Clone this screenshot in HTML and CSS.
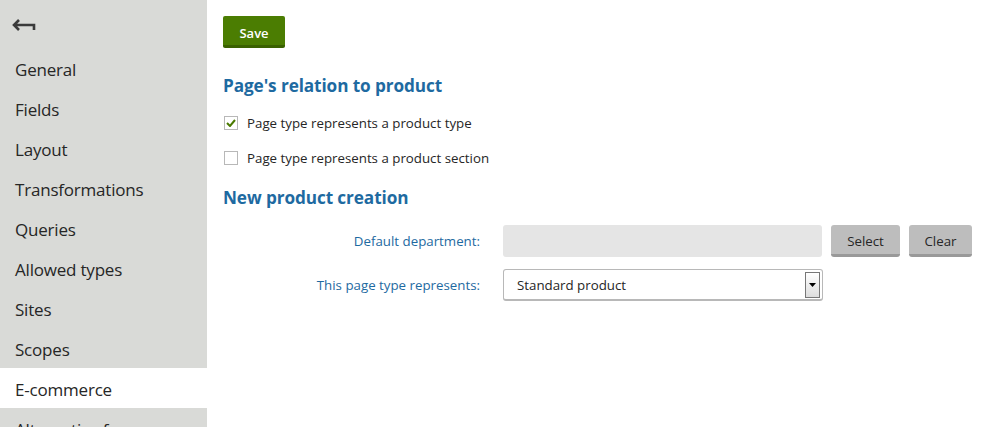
FILE: index.html
```html
<!DOCTYPE html>
<html>
<head>
<meta charset="utf-8">
<link rel="stylesheet" href="styles.css">
</head>
<body>
<div class="layout">
  <nav class="sidebar">
    <div class="back">
      <svg width="24" height="14" viewBox="0 0 24 14"><path d="M7 2 L2 7 L7 12 M2 7 H22 V12" fill="none" stroke="#3a3a3a" stroke-width="2.6" stroke-linejoin="miter"/></svg>
    </div>
    <ul class="menu">
      <li>General</li>
      <li>Fields</li>
      <li>Layout</li>
      <li>Transformations</li>
      <li>Queries</li>
      <li>Allowed types</li>
      <li>Sites</li>
      <li>Scopes</li>
      <li class="active">E-commerce</li>
      <li>Alternative forms</li>
    </ul>
  </nav>
  <main class="content">
    <button class="btn-save">Save</button>
    <h2 class="heading">Page's relation to product</h2>
    <label class="check"><span class="box checked"><svg width="10" height="8" viewBox="0 0 10 8"><path d="M1 4 L4 7 L9 1" fill="none" stroke="#4a7a00" stroke-width="2"/></svg></span>Page type represents a product type</label>
    <label class="check"><span class="box"></span>Page type represents a product section</label>
    <h2 class="heading heading2">New product creation</h2>
    <div class="form-row">
      <div class="label">Default department:</div>
      <div class="input"></div>
      <button class="btn-gray">Select</button>
      <button class="btn-gray">Clear</button>
    </div>
    <div class="form-row row2">
      <div class="label">This page type represents:</div>
      <div class="select"><span>Standard product</span><span class="arrow"><svg width="7" height="4" viewBox="0 0 7 4"><path d="M0 0 H7 L3.5 4 Z" fill="#000"/></svg></span></div>
    </div>
  </main>
</div>
</body>
</html>
```
FILE: styles.css
```css
* { box-sizing: border-box; }
html, body { margin: 0; padding: 0; }
body {
  font-family: "Open Sans", "Noto Sans", sans-serif;
  background: #fff;
  width: 983px;
  height: 427px;
  overflow: hidden;
}
.layout { display: flex; height: 427px; }
.sidebar {
  width: 207px;
  flex: none;
  background: #d9dad7;
  height: 100%;
}
.back { height: 48px; padding: 15px 0 0 12px; }
.menu { list-style: none; margin: 0; padding: 0; }
.menu li {
  height: 40px;
  line-height: 37px;
  padding: 3px 0 0 15px;
  font-size: 17px;
  color: #262626;
  letter-spacing: -0.2px;
  white-space: nowrap;
}
.menu li.active { background: #fff; }
.content { padding: 16px 0 0 16px; flex: 1; }
.btn-save {
  display: block;
  width: 62px;
  height: 32px;
  background: #4b7d02;
  border: none;
  border-bottom: 3px solid #3a6100;
  border-radius: 2px;
  color: #fff;
  font-family: inherit;
  font-size: 13px;
  font-weight: 600;
  padding: 4px 0 0;
}
.heading {
  margin: 26px 0 0 0;
  font-size: 17.2px;
  font-weight: 700;
  color: #1e6aa1;
  line-height: 24px;
  letter-spacing: -0.1px;
}
.heading2 { margin-top: 20px; }
.check {
  display: flex;
  align-items: center;
  margin: 17px 0 0 1px;
  height: 16px;
  font-size: 13.3px;
  color: #262626;
}
.check + .check { margin-top: 19px; }
.box {
  width: 14px;
  height: 14px;
  border: 1px solid #b8b8b8;
  background: #fff;
  margin-right: 9px;
  display: flex;
  align-items: center;
  justify-content: center;
}
.form-row {
  display: flex;
  align-items: center;
  margin-top: 15px;
}
.row2 { margin-top: 12px; }
.label {
  width: 257px;
  text-align: right;
  font-size: 13.3px;
  color: #1e6aa1;
  margin-right: 23px;
}
.input {
  width: 319px;
  height: 32px;
  background: #e5e5e5;
  border-radius: 3px;
  margin-right: 9px;
}
.btn-gray {
  height: 32px;
  background: #bdbdbd;
  border: none;
  border-bottom: 3px solid #999;
  border-radius: 3px;
  font-family: inherit;
  font-size: 13.3px;
  color: #262626;
  padding: 3px 0 0;
  margin-right: 9px;
}
.btn-gray:nth-of-type(1) { width: 69px; }
.btn-gray:nth-of-type(2) { width: 63px; }
.select {
  width: 320px;
  height: 32px;
  border: 1px solid #b8b8b8;
  border-bottom-width: 2px;
  border-radius: 3px;
  display: flex;
  align-items: center;
  justify-content: space-between;
  padding: 0 2px 0 13px;
  font-size: 13.3px;
  color: #262626;
}
.arrow {
  width: 15px;
  height: 26px;
  border: 1px solid #777;
  background: linear-gradient(#fff, #ddd);
  display: flex;
  align-items: center;
  justify-content: center;
}
```
